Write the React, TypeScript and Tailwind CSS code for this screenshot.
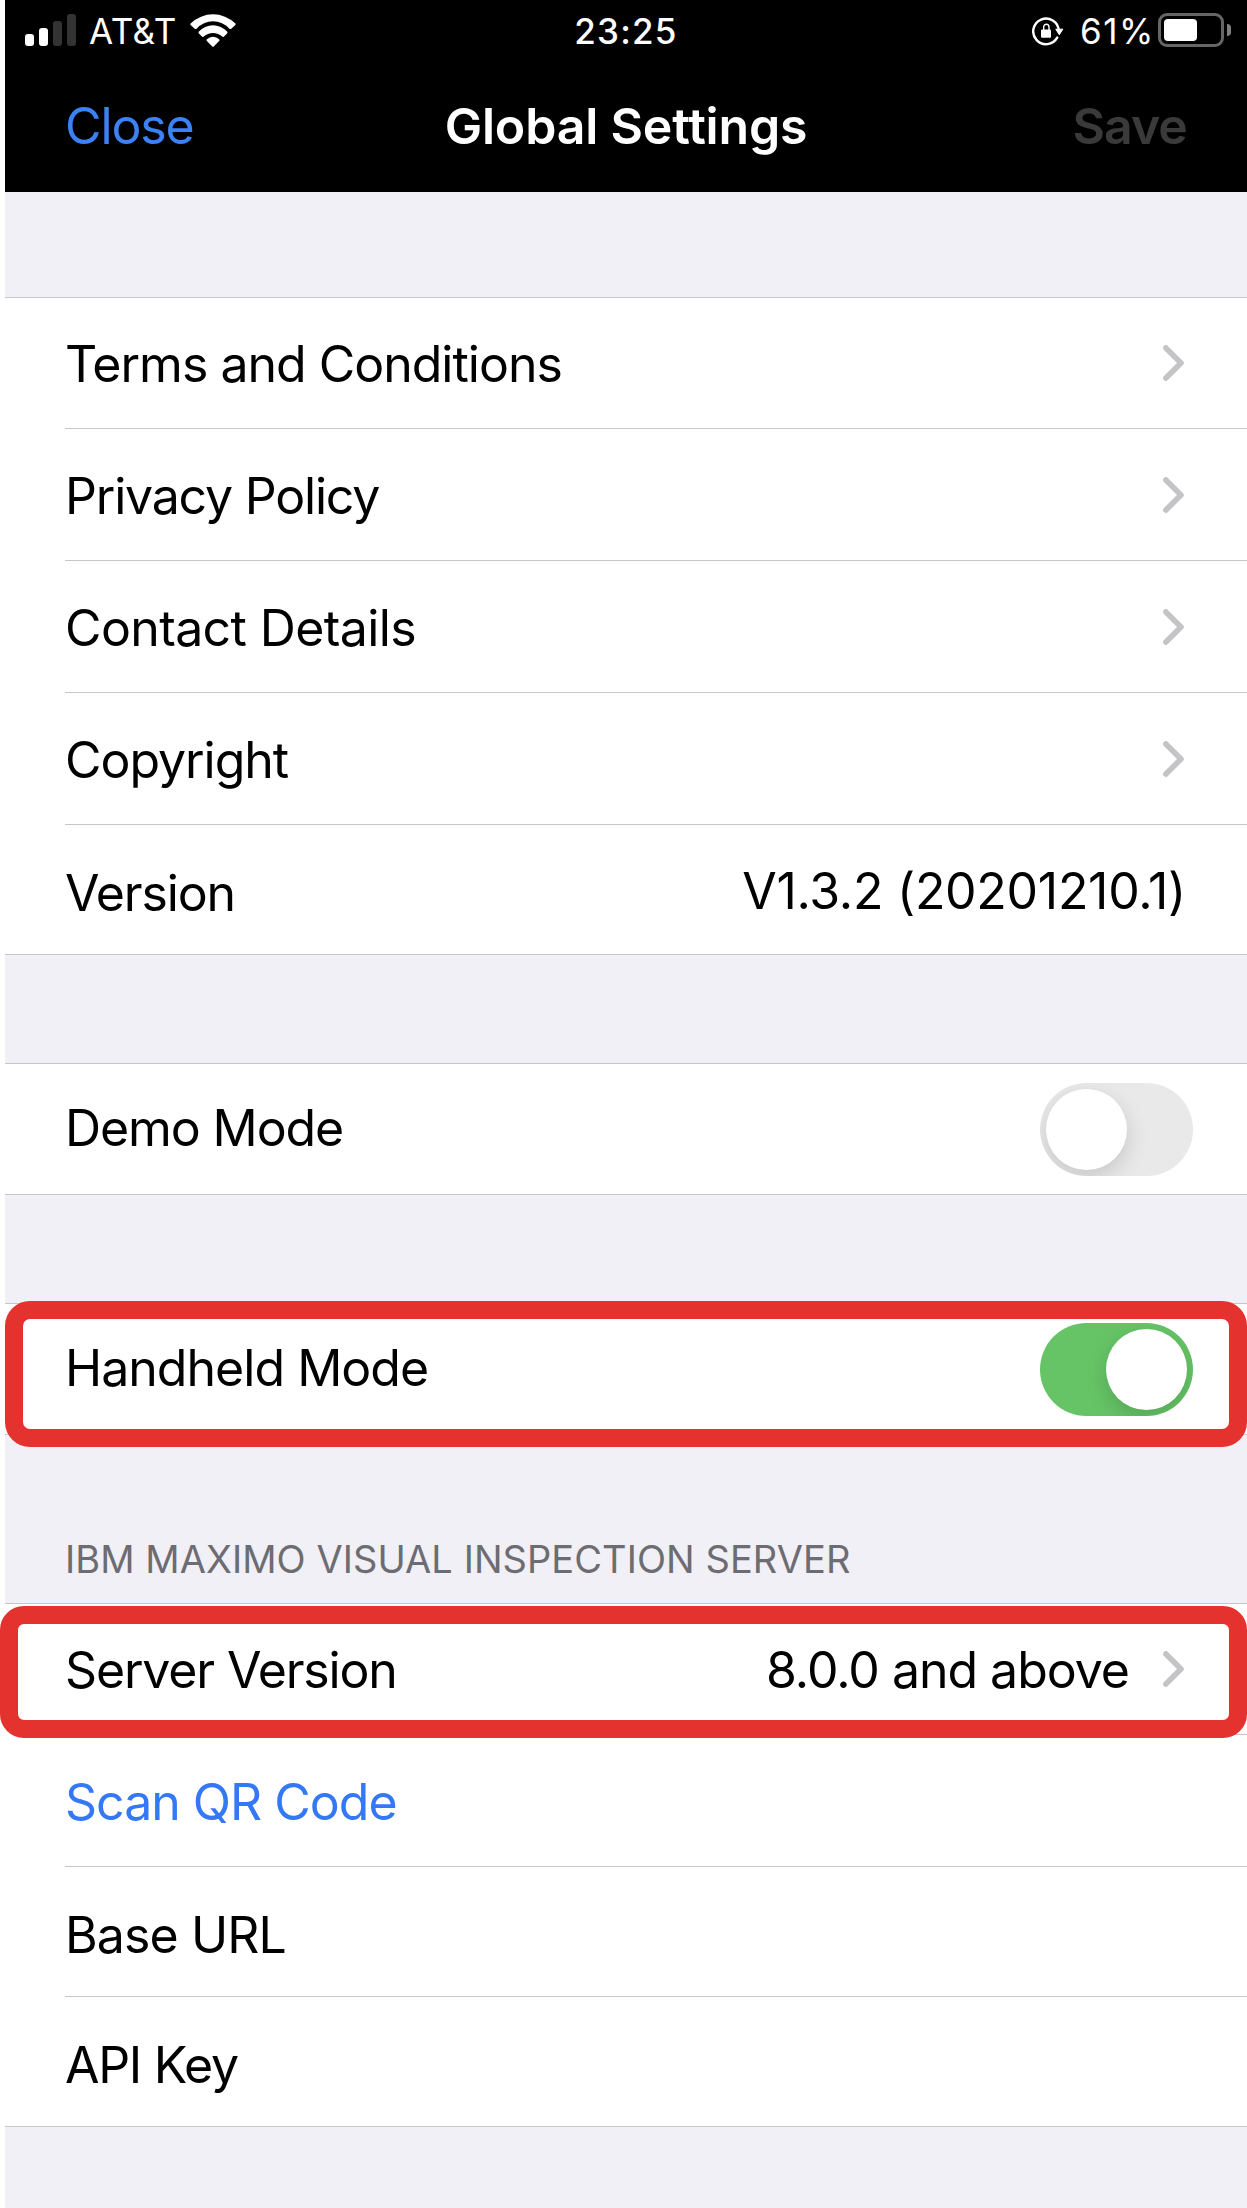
import type { ReactNode } from "react";

function SignalBars() {
  return (
    <div className="flex h-8 items-end gap-[5px]">
      <span className="h-3 w-[9px] rounded-[3px] bg-white" />
      <span className="h-[18px] w-[9px] rounded-[3px] bg-white" />
      <span className="h-[25px] w-[9px] rounded-[3px] bg-[#333333]" />
      <span className="h-8 w-[9px] rounded-[3px] bg-[#333333]" />
    </div>
  );
}

function WifiIcon() {
  return (
    <svg width="46" height="33" viewBox="0 0 46 33" fill="white">
      <path d="M.9 9.2A32 32 0 0 1 45.1 9.2Q46.2 10.2 45.1 11.2L41 14.9Q40.2 15.4 39.4 14.7A21.9 21.9 0 0 0 6.6 14.7Q5.8 15.4 5 14.9L.9 11.2Q-.2 10.2.9 9.2Z" />
      <path d="M8.9 17.6A19 19 0 0 1 37.1 17.6Q38 18.6 37.1 19.4L33.8 22.7Q33 23.3 32.2 22.6A13.5 13.5 0 0 0 13.8 22.6Q13 23.3 12.2 22.7L8.9 19.4Q8 18.6 8.9 17.6Z" />
      <path d="M16.9 25.3A8.5 8.5 0 0 1 29.1 25.3Q29.9 26.2 29.1 27.1L24 32.3Q23 33.3 22 32.3L16.9 27.1Q16.1 26.2 16.9 25.3Z" />
    </svg>
  );
}

function RotationLockIcon() {
  return (
    <svg width="32" height="30" viewBox="0 0 32 30" fill="none" stroke="white">
      <path d="M25.2 20.6A12.8 12.8 0 1 1 26.8 13.6" strokeWidth="2.4" strokeLinecap="round" />
      <path d="M23.8 12.2H30.8L27.3 17.8Z" fill="white" strokeLinejoin="round" />
      <path d="M11.7 13.5V10.1a2.65 2.9 0 0 1 5.3 0V13.5" strokeWidth="1.4" />
      <rect x="9" y="12.5" width="10" height="8.3" rx="1" fill="white" stroke="none" />
    </svg>
  );
}

function Battery() {
  return (
    <div className="flex items-center gap-[3px]">
      <div className="flex h-[34px] w-[66px] items-center rounded-[9px] border-[3px] border-[#666666] pl-[3px]">
        <div className="h-[22px] w-[33px] rounded-[4px] bg-white" />
      </div>
      <div className="h-3 w-1 rounded-r-full bg-[#808080]" />
    </div>
  );
}

function Chevron() {
  return (
    <svg width="21" height="36" viewBox="0 0 21 36" fill="none" className="shrink-0">
      <path
        d="M2.9 2.9L18 18L2.9 33.1"
        stroke="#c4c4c6"
        strokeWidth="5.6"
        strokeLinecap="round"
        strokeLinejoin="round"
      />
    </svg>
  );
}

function Toggle({ on = false }: { on?: boolean }) {
  return (
    <div
      role="switch"
      aria-checked={on}
      className={
        on
          ? "mr-[54px] mt-px flex h-[93px] w-[153px] items-center justify-end overflow-hidden rounded-full bg-[#66c466] px-1.5"
          : "mr-[54px] mt-px flex h-[93px] w-[153px] items-center overflow-hidden rounded-full bg-[#e9e9e9] px-1.5"
      }
    >
      <div className="size-[81px] rounded-full bg-white shadow-[0_8px_22px_rgba(0,0,0,0.15)]" />
    </div>
  );
}

type RowProps = {
  label: string;
  labelClass: string;
  rowClass: string;
  divider?: boolean;
  children?: ReactNode;
};

function Row({ label, labelClass, rowClass, divider = false, children }: RowProps) {
  return (
    <div className={`ml-[60px] flex items-center justify-between ${rowClass} ${divider ? "border-b border-[#c6c6c8]" : ""}`}>
      <span className={labelClass}>{label}</span>
      {children}
    </div>
  );
}

function Group({ children }: { children: ReactNode }) {
  return <section className="relative border-y border-[#c6c6c8] bg-white">{children}</section>;
}

export default function App() {
  return (
    <div className="h-[2208px] w-[1247px] overflow-hidden bg-white pl-[5px] font-['Inter',sans-serif] text-[50px] leading-none whitespace-nowrap text-black">
      <div className="h-full bg-[#f1f0f6]">
        <header className="h-48 bg-black text-white">
          <div className="grid h-[60px] grid-cols-3 items-center text-[35px]">
            <div className="flex items-center pl-5">
              <SignalBars />
              <span className="ml-[13px] pt-[3px] tracking-[0.5px]">AT&amp;T</span>
              <span className="ml-[13px]">
                <WifiIcon />
              </span>
            </div>
            <span className="pt-[3px] text-center font-medium tracking-[1.2px]">23:25</span>
            <div className="flex items-center justify-end pr-4">
              <span className="pt-1">
                <RotationLockIcon />
              </span>
              <span className="mr-[3px] ml-4 pt-[3px] tracking-[1.6px]">61%</span>
              <Battery />
            </div>
          </div>
          <nav className="grid h-[132px] grid-cols-3 items-center">
            <span className="pl-[60px] tracking-[-1.1px] text-[#3b82f7]">Close</span>
            <h1 className="text-center font-semibold tracking-[-0.18px]">Global Settings</h1>
            <span className="pr-[60px] text-right font-semibold tracking-[-0.95px] text-[#3a3a3a]">Save</span>
          </nav>
        </header>

        <main className="pt-[105px]">
          <Group>
            <Row label="Terms and Conditions" rowClass="h-[131px]" labelClass="pt-[2px] tracking-[-1px]" divider>
              <span className="mr-[63px]"><Chevron /></span>
            </Row>
            <Row label="Privacy Policy" rowClass="h-[132px]" labelClass="pt-[3px] tracking-[-1.2px]" divider>
              <span className="mr-[63px]"><Chevron /></span>
            </Row>
            <Row label="Contact Details" rowClass="h-[132px]" labelClass="pt-[3px] tracking-[-0.62px]" divider>
              <span className="mr-[63px]"><Chevron /></span>
            </Row>
            <Row label="Copyright" rowClass="h-[132px]" labelClass="pt-[3px] tracking-[-1.05px]" divider>
              <span className="mr-[63px]"><Chevron /></span>
            </Row>
            <Row label="Version" rowClass="h-[129px]" labelClass="pt-[6px] tracking-[-1.15px]">
              <span className="mr-[61px] pt-[2px] tracking-[-0.28px]">V1.3.2 (20201210.1)</span>
            </Row>
          </Group>

          <div className="h-[108px]" />
          <Group>
            <Row label="Demo Mode" rowClass="h-[130px]" labelClass="pb-[2px] tracking-[-1.1px]">
              <Toggle />
            </Row>
          </Group>

          <div className="h-[108px]" />
          <Group>
            <Row label="Handheld Mode" rowClass="h-[130px]" labelClass="pb-[2px] tracking-[-0.97px]">
              <Toggle on />
            </Row>
            <div className="absolute -top-[3px] left-[-0.5px] z-10 h-[146px] w-[1242.5px] rounded-[25px] border-[18px] border-[#e4322f]" />
          </Group>

          <h2 className="flex h-[168px] items-end pb-[25px] pl-[60px] text-[38px] tracking-[0.06px] text-[#6d6c72]">
            IBM MAXIMO VISUAL INSPECTION SERVER
          </h2>
          <Group>
            <Row label="Server Version" rowClass="h-[131px]" labelClass="pt-[2px] tracking-[-1.16px]" divider>
              <span className="mr-[63px] flex items-center gap-[34px]">
                <span className="pt-[2px] tracking-[-1.02px]">8.0.0 and above</span>
                <Chevron />
              </span>
            </Row>
            <Row label="Scan QR Code" rowClass="h-[132px]" labelClass="pt-[3px] tracking-[-1px] text-[#3478f6]" divider />
            <Row label="Base URL" rowClass="h-[130px]" labelClass="pt-[6px] tracking-[-0.9px]" divider />
            <Row label="API Key" rowClass="h-[129px]" labelClass="pt-[6px] tracking-[-1.3px]" />
            <div className="absolute top-[2px] -left-[5px] z-10 h-[132px] w-[1247px] rounded-[24px] border-[18px] border-[#e4322f]" />
          </Group>
        </main>
      </div>
    </div>
  );
}
